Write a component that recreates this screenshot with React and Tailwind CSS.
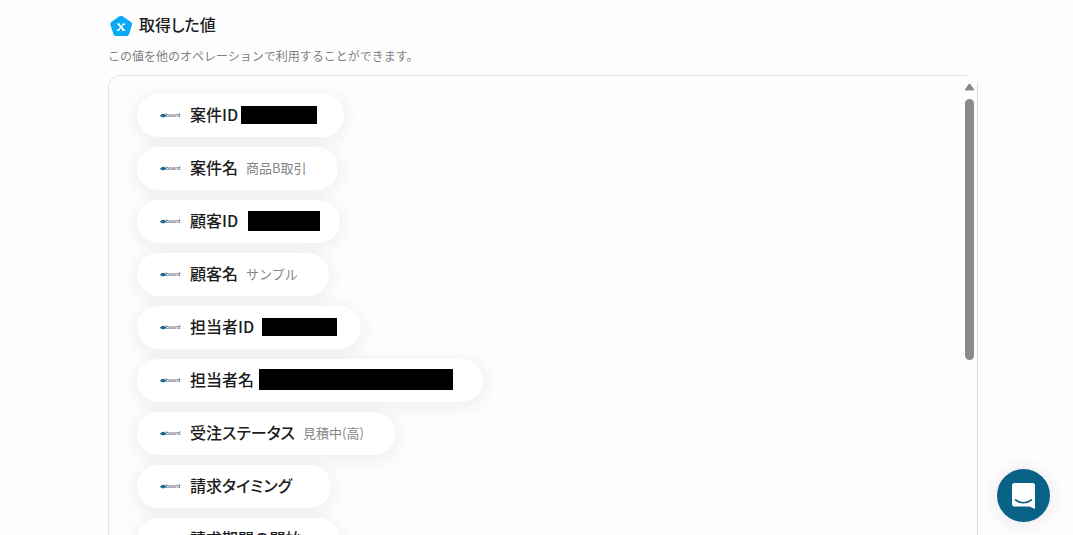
import React from 'react';

const fields = [
  { label: '案件ID', masked: 'ml-[3px] mr-[27px] h-[18px] w-[76px]' },
  { label: '案件名', value: '商品B取引' },
  { label: '顧客ID', masked: 'ml-[10px] mr-5 h-5 w-[72px]' },
  { label: '顧客名', value: 'サンプル' },
  { label: '担当者ID', masked: 'ml-2 mr-6 h-[18px] w-[75px]' },
  { label: '担当者名', masked: 'ml-[5px] mr-[30px] h-[21px] w-[194px]' },
  { label: '受注ステータス', value: '見積中(高)' },
  { label: '請求タイミング', value: '' },
  { label: '請求期間の開始', value: '' },
];

const BoardLogo = () => (
  <svg className="h-5 w-5 shrink-0 overflow-visible" viewBox="0 0 20 20" aria-hidden="true">
    <ellipse cx="3.2" cy="10.6" rx="2.4" ry="1.8" fill="#17699b" />
    <path d="M0 10.800h6" stroke="#17699b" strokeWidth="1" />
    <text x="5.4" y="12.4" fontSize="5.2" fill="#2c2c3a" fontFamily="DejaVu Sans, sans-serif">board</text>
  </svg>
);

const PentagonIcon = () => (
  <svg className="h-6 w-6 shrink-0" viewBox="0 0 24 24" aria-hidden="true">
    <path
      d="M10.400 3.300q1.600-1 3.200 0l8.300 5.600q1.500 1.200 1 3l-2.700 9.200q-.6 1.900-2.500 1.900H6.900q-1.900 0-2.500-1.900L1.400 11.900q-.5-1.800 1-3z"
      fill="#05a9f4"
    />
    <path d="M8 11.100h3M13.300 11.100h3M7.700 17.200h3M13.200 17.200h3.200" stroke="#fff" strokeWidth="1.200" />
    <path d="M9.500 11.100l5.200 6.100" stroke="#fff" strokeWidth="2" />
    <path d="M14.700 11.100l-5.500 6.100" stroke="#fff" strokeWidth="1.200" />
  </svg>
);

const FieldPill = ({ label, value, masked }) => (
  <li className="flex h-[43px] items-center rounded-full bg-white pb-[2px] pl-[23px] shadow-[0_3px_14px_4px_rgba(50,35,50,0.06)]">
    <BoardLogo />
    <span className="ml-[10px] pb-[2px] text-base leading-6 font-medium text-[#1c1c20] [font-feature-settings:'palt']">
      {label}
    </span>
    {masked ? (
      <span className={`bg-black ${masked}`} />
    ) : (
      <span className="mr-[31px] ml-2 text-[13px] leading-5 text-[#858587]">{value}</span>
    )}
  </li>
);

const App = () => {
  return (
    <div className="h-screen overflow-hidden bg-[#fefdfe] pt-3 pr-[95px] pl-[108px] font-['Noto_Sans_CJK_JP',sans-serif]">
      <div className="flex items-center gap-[6px] pl-px">
        <PentagonIcon />
        <h1 className="pb-[2px] text-base leading-6 font-medium text-[#1c1c20] [font-feature-settings:'palt']">
          取得した値
        </h1>
      </div>
      <p className="mt-2 text-xs leading-5 text-[#7f7f82]">
        この値を他のオペレーションで利用することができます。
      </p>

      <div className="relative mt-[9px] rounded-xl border border-[#e2e1e4]">
        <ul className="flex flex-col items-start gap-[10px] py-[18px] pl-7">
          {fields.map((field) => (
            <FieldPill key={field.label} {...field} />
          ))}
        </ul>
        {/* scroll track, covers the rounded corner */}
        <div className="absolute -top-px -right-px bottom-0 flex w-[10px] flex-col bg-[#fefdfe]">
          <div className="h-2" />
          <div className="relative flex-1 border-r border-[#dddce0]">
            <svg className="absolute top-0 -left-[3px] h-2 w-[9px]" viewBox="0 0 9 8" aria-hidden="true">
              <path d="M4.500 1.700L8 6.600H1z" fill="#8b898c" stroke="#8b898c" strokeWidth="2" strokeLinejoin="round" />
            </svg>
            <div className="absolute top-4 -left-[3px] h-[261px] w-[9px] rounded-full bg-[#8b898c]" />
          </div>
        </div>
      </div>

      <button
        type="button"
        aria-label="チャットを開く"
        className="fixed right-[23px] bottom-[13px] flex h-[53px] w-[53px] items-center justify-center rounded-full bg-[#076285] shadow-[0_1px_14px_4px_rgba(50,35,50,0.07)]"
      >
        <svg className="h-7 w-7" viewBox="0 0 28 28" aria-hidden="true">
          <path d="M4.500 1h18q2.500 0 2.500 2.500v23.500l-5.500-2.500h-15q-2.500 0-2.500-2.500V3.500q0-2.500 2.500-2.500z" fill="#fff" />
          <path d="M5.500 18q8 5.500 16 0" fill="none" stroke="#076285" strokeWidth="1.600" strokeLinecap="round" />
        </svg>
      </button>
    </div>
  );
};

export default App;
